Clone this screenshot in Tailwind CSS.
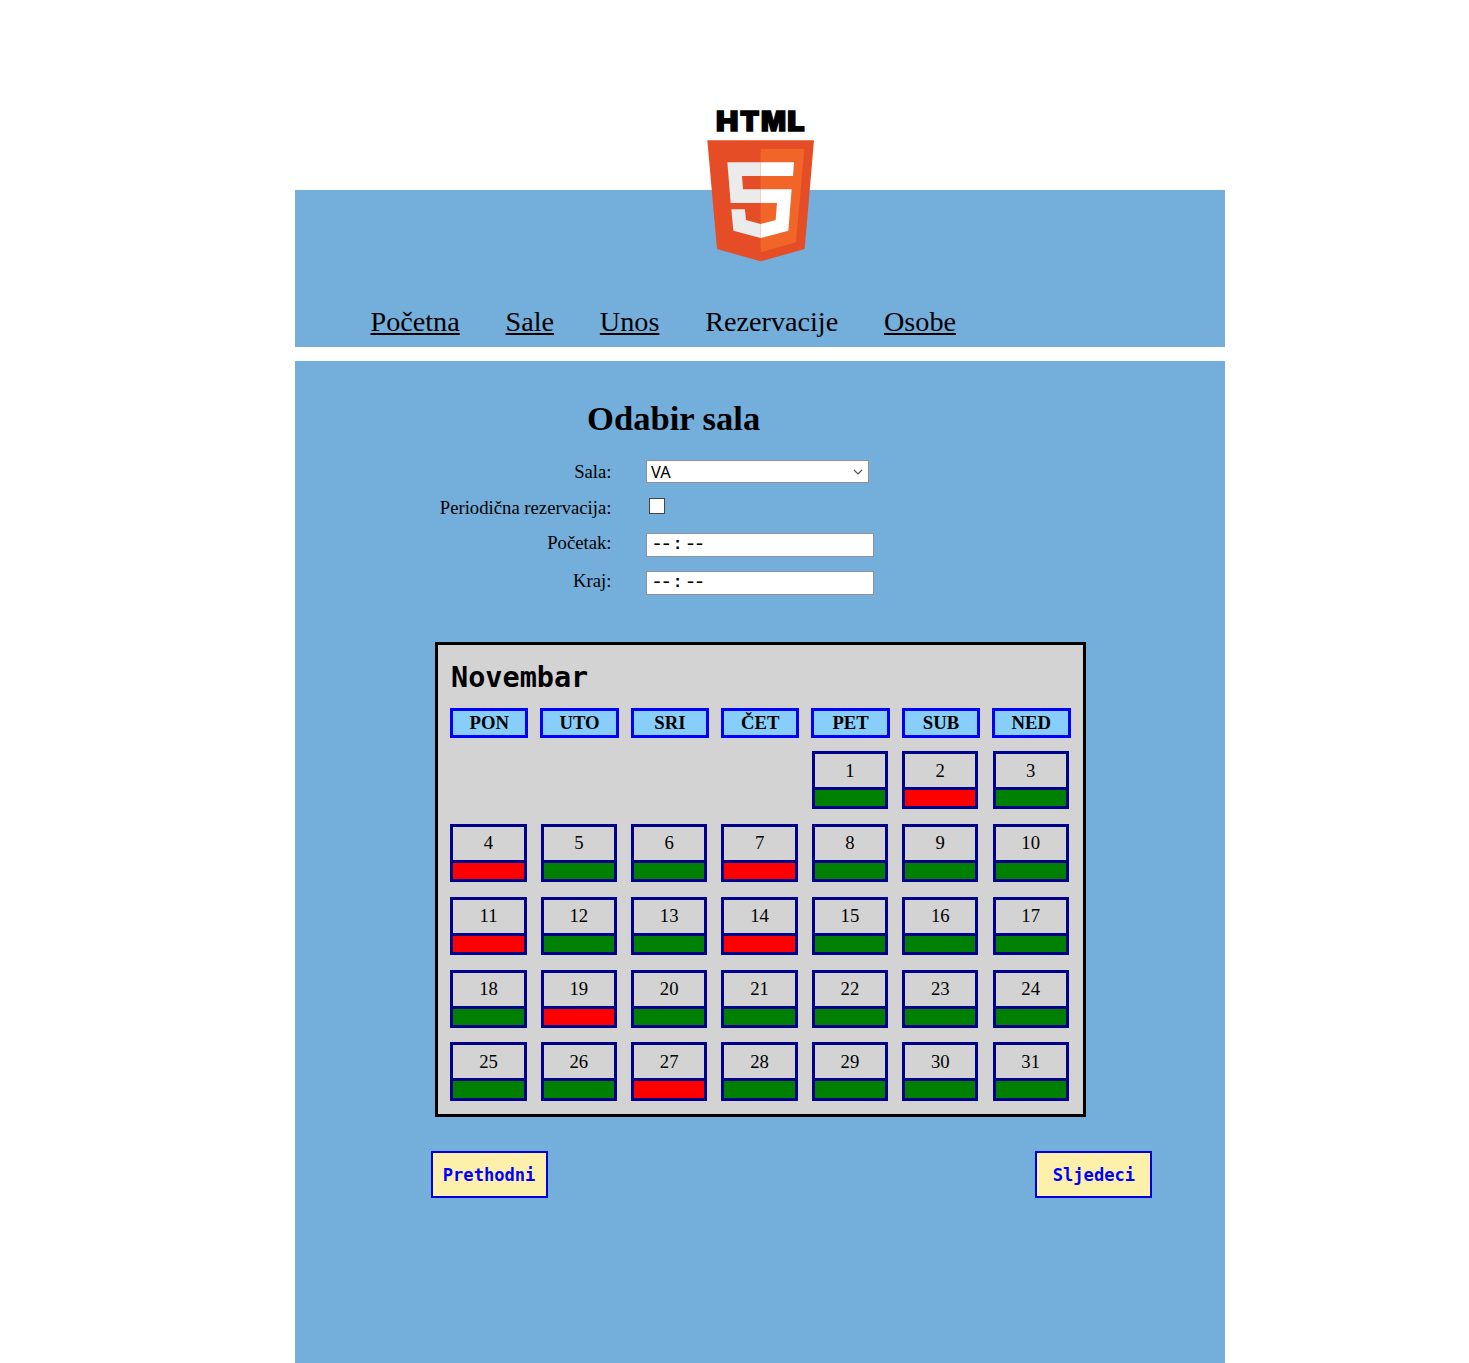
<!DOCTYPE html>
<html lang="bs">
<head>
<meta charset="utf-8">
<title>Rezervacije</title>
<script src="https://cdn.jsdelivr.net/npm/@tailwindcss/browser@4"></script>
</head>
<body class="h-[1363px] overflow-hidden bg-white pt-[190px] pl-[295px] font-['Liberation_Serif',serif] text-[18.7px] leading-[22px] text-black">
<div class="flex w-[930px] flex-col gap-[14px]">
  <header class="relative flex h-[157px] items-end bg-[#74aedb] pl-[75.5px]">
    <svg class="absolute left-[385px] top-[-100px] h-[190px] w-[160px]" viewBox="0 0 480 570" role="img" aria-label="HTML5">
      <g font-family="Inter, sans-serif" font-weight="900" font-size="82" stroke="#000" stroke-width="4">
        <text x="108" y="123" textLength="67" lengthAdjust="spacingAndGlyphs">H</text>
        <text x="180" y="123" textLength="58" lengthAdjust="spacingAndGlyphs">T</text>
        <text x="243" y="123" textLength="75" lengthAdjust="spacingAndGlyphs">M</text>
        <text x="322" y="123" textLength="52" lengthAdjust="spacingAndGlyphs">L</text>
      </g>
      <path fill="#e44d26" d="M82 151H402L374 477L242 514L111 477Z"/>
      <path fill="#f16529" d="M242 177H373L348 457L242 487Z"/>
      <path fill="#ebebeb" d="M242 217H142L152 339H242V298H189L186 258H242ZM242 402L198 390L195 358H154L160 422L242 444Z"/>
      <path fill="#fff" d="M242 217H342L339 258H242ZM242 298H335L325 422L242 444V402L287 390L291 339H242Z"/>
    </svg>
    <nav class="flex gap-[45.8px] pb-[9px] text-[28.2px] leading-[32px]">
      <a class="underline decoration-2 underline-offset-[2px]">Početna</a>
      <a class="underline decoration-2 underline-offset-[2px]">Sale</a>
      <a class="underline decoration-2 underline-offset-[2px]">Unos</a>
      <a>Rezervacije</a>
      <a class="underline decoration-2 underline-offset-[2px]">Osobe</a>
    </nav>
  </header>

  <main class="h-[1002px] bg-[#74aedb] pt-[37px]">
    <h1 class="ml-[292px] text-[34.6px] leading-[40px] font-bold">Odabir sala</h1>
    <form class="mt-[22px] grid h-[135px] grid-cols-[316px_228px] grid-rows-[38px_35px_38px_24px] gap-x-[35px]">
      <label class="-mr-[0.5px] pt-[1px] text-right">Sala:</label>
      <div class="flex h-[23px] w-[223px] items-center justify-between border border-[#8f8f9d] bg-white pr-[5px] pl-[4px] font-['Noto_Sans',sans-serif] text-[16.4px]"><span class="pt-px">VA</span>
        <svg class="h-[10px] w-[10px]" viewBox="0 0 10 10" fill="none" stroke="#555" stroke-width="1.2"><path d="M1 3L5 7L9 3"/></svg>
      </div>
      <label class="-mt-px -mr-[0.5px] text-right">Periodična rezervacija:</label>
      <div class="ml-[3px] h-4 w-4 border border-[#444] bg-white"></div>
      <label class="-mt-[1px] -mr-[0.5px] text-right">Početak:</label>
      <div class="flex h-[24px] items-center gap-[2px] border border-[#8f8f9d] bg-white pl-[4px] font-['Liberation_Mono',monospace] text-[20px] tracking-[-2.8px]"><span>--</span><span class="mr-px ml-px text-[17px] font-bold tracking-[-1.2px]">:</span><span>--</span></div>
      <label class="-mt-[1px] -mr-[0.5px] text-right">Kraj:</label>
      <div class="flex h-[24px] items-center gap-[2px] border border-[#8f8f9d] bg-white pl-[4px] font-['Liberation_Mono',monospace] text-[20px] tracking-[-2.8px]"><span>--</span><span class="mr-px ml-px text-[17px] font-bold tracking-[-1.2px]">:</span><span>--</span></div>
    </form>

    <section class="mt-[47px] ml-[140px] h-[475px] w-[651px] border-[3px] border-black bg-[#d3d3d3] pt-[15px] pl-3">
      <h2 class="pt-px pl-px font-['DejaVu_Sans_Mono',monospace] text-[28.5px] leading-[34px] font-bold">Novembar</h2>
      <div id="weekdays" class="mt-[13px] grid grid-cols-[repeat(7,90.36px)]"></div>
      <div id="days" class="mt-[13px] grid grid-cols-[repeat(7,90.36px)] auto-rows-[72.85px]"></div>
    </section>

    <div class="mt-[34px] ml-[135.6px] flex w-[721.8px] justify-between font-['DejaVu_Sans_Mono',monospace] text-[17.1px] font-bold text-[#0000ff]">
      <button class="h-[47px] w-[117px] border-2 border-[#0000dd] bg-[#fdf0ab]">Prethodni</button>
      <button class="h-[47px] w-[117px] border-2 border-[#0000dd] bg-[#fdf0ab]">Sljedeci</button>
    </div>
  </main>
</div>
<script>
  document.getElementById('weekdays').innerHTML = ['PON', 'UTO', 'SRI', 'ČET', 'PET', 'SUB', 'NED']
    .map(d => `<div class="flex h-[30px] w-[78.4px] items-center justify-center border-[3px] border-[#0000ff] bg-[#87cefa] font-bold">${d}</div>`).join('');
  const booked = [2, 4, 7, 11, 14, 19, 27];
  let cells = '<div class="col-span-4"></div>';
  for (let d = 1; d <= 31; d++) {
    const color = booked.includes(d) ? 'bg-[#ff0000]' : 'bg-[#008000]';
    cells += `<div class="ml-[0.4px] flex h-[58.2px] w-[76.2px] flex-col border-[3px] border-[#00008b]"><div class="flex h-[36px] items-center justify-center border-b-[3px] border-[#00008b]">${d}</div><div class="grow ${color}"></div></div>`;
  }
  document.getElementById('days').innerHTML = cells;
</script>
</body>
</html>
